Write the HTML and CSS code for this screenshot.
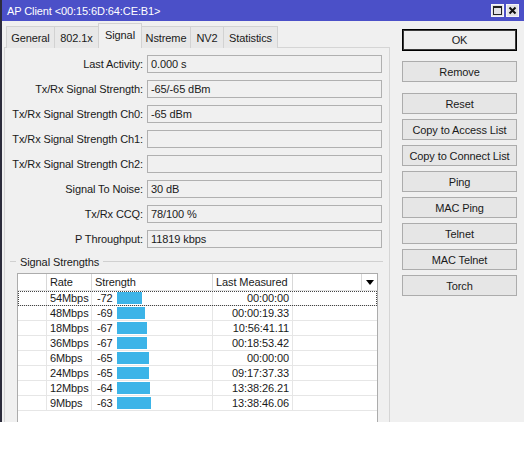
FILE: index.html
```html
<!DOCTYPE html>
<html>
<head>
<meta charset="utf-8">
<link rel="stylesheet" href="styles.css">
</head>
<body>
<div class="window">
  <div class="titlebar">
    <span class="title">AP Client &lt;00:15:6D:64:CE:B1&gt;</span>
    <div class="tbtns">
      <span class="tb"><svg width="13" height="13" viewBox="0 0 13 13"><rect x="0.5" y="0.5" width="12" height="12" fill="#e2e2e6" stroke="#f4f4f8"/><rect x="2.5" y="2.5" width="8" height="8" fill="none" stroke="#222"/><line x1="2" y1="3.5" x2="11" y2="3.5" stroke="#222"/></svg></span>
      <span class="tb"><svg width="13" height="13" viewBox="0 0 13 13"><rect x="0.5" y="0.5" width="12" height="12" fill="#e2e2e6" stroke="#f4f4f8"/><path d="M3.5 3.5 L9.5 9.5 M9.5 3.5 L3.5 9.5" stroke="#111" stroke-width="2"/></svg></span>
    </div>
  </div>
  <div class="main">
    <div class="left">
      <div class="tabs">
        <div class="tab w-general">General</div>
        <div class="tab w-8021x">802.1x</div>
        <div class="tab w-signal active">Signal</div>
        <div class="tab w-nstreme">Nstreme</div>
        <div class="tab w-nv2">NV2</div>
        <div class="tab w-stats">Statistics</div>
      </div>
      <div class="panel">
        <div class="form">
          <div class="row"><div class="lbl">Last Activity:</div><div class="val">0.000 s</div></div>
          <div class="row"><div class="lbl">Tx/Rx Signal Strength:</div><div class="val">-65/-65 dBm</div></div>
          <div class="row"><div class="lbl">Tx/Rx Signal Strength Ch0:</div><div class="val">-65 dBm</div></div>
          <div class="row"><div class="lbl">Tx/Rx Signal Strength Ch1:</div><div class="val"></div></div>
          <div class="row"><div class="lbl">Tx/Rx Signal Strength Ch2:</div><div class="val"></div></div>
          <div class="row"><div class="lbl">Signal To Noise:</div><div class="val">30 dB</div></div>
          <div class="row"><div class="lbl">Tx/Rx CCQ:</div><div class="val">78/100 %</div></div>
          <div class="row"><div class="lbl">P Throughput:</div><div class="val">11819 kbps</div></div>
        </div>
        <div class="group"><span class="dash"></span><span class="legend">Signal Strengths</span><span class="gline"></span></div>
        <div class="tbl">
          <div class="thead">
            <div class="th"></div>
            <div class="th">Rate</div>
            <div class="th">Strength</div>
            <div class="th">Last Measured</div>
            <div class="th"></div>
            <div class="th arrowcell"><span class="arrow"></span></div>
          </div>
          <div class="tr sel"><div class="td"></div><div class="td">54Mbps</div><div class="td str"><span class="num">-72</span><span class="bar" style="width:25px"></span></div><div class="td time">00:00:00</div><div class="td"></div></div>
          <div class="tr"><div class="td"></div><div class="td">48Mbps</div><div class="td str"><span class="num">-69</span><span class="bar" style="width:28px"></span></div><div class="td time">00:00:19.33</div><div class="td"></div></div>
          <div class="tr"><div class="td"></div><div class="td">18Mbps</div><div class="td str"><span class="num">-67</span><span class="bar" style="width:30px"></span></div><div class="td time">10:56:41.11</div><div class="td"></div></div>
          <div class="tr"><div class="td"></div><div class="td">36Mbps</div><div class="td str"><span class="num">-67</span><span class="bar" style="width:30px"></span></div><div class="td time">00:18:53.42</div><div class="td"></div></div>
          <div class="tr"><div class="td"></div><div class="td">6Mbps</div><div class="td str"><span class="num">-65</span><span class="bar" style="width:32px"></span></div><div class="td time">00:00:00</div><div class="td"></div></div>
          <div class="tr"><div class="td"></div><div class="td">24Mbps</div><div class="td str"><span class="num">-65</span><span class="bar" style="width:32px"></span></div><div class="td time">09:17:37.33</div><div class="td"></div></div>
          <div class="tr"><div class="td"></div><div class="td">12Mbps</div><div class="td str"><span class="num">-64</span><span class="bar" style="width:33px"></span></div><div class="td time">13:38:26.21</div><div class="td"></div></div>
          <div class="tr"><div class="td"></div><div class="td">9Mbps</div><div class="td str"><span class="num">-63</span><span class="bar" style="width:34px"></span></div><div class="td time">13:38:46.06</div><div class="td"></div></div>
        </div>
      </div>
    </div>
    <div class="buttons">
      <div class="btn ok">OK</div>
      <div class="btn remove">Remove</div>
      <div class="btn">Reset</div>
      <div class="btn">Copy to Access List</div>
      <div class="btn">Copy to Connect List</div>
      <div class="btn">Ping</div>
      <div class="btn">MAC Ping</div>
      <div class="btn">Telnet</div>
      <div class="btn">MAC Telnet</div>
      <div class="btn">Torch</div>
    </div>
  </div>
</div>
</body>
</html>
```
FILE: styles.css
```css
body {
  margin: 0;
  background: #ffffff;
  font-family: "Liberation Sans", Arial, sans-serif;
  font-size: 11px;
  letter-spacing: -0.1px;
  color: #1a1a1a;
}
.window {
  width: 522px;
  height: 422px;
  border-left: 2px solid #2c2c3c;
  background: #f0f0f0;
  display: flex;
  flex-direction: column;
  overflow: hidden;
}
.titlebar {
  height: 21px;
  flex: none;
  background: #4b50c8;
  color: #fff;
  display: flex;
  align-items: center;
  justify-content: space-between;
  padding-left: 5px;
  font-size: 11px;
}
.tbtns {
  display: flex;
  gap: 2px;
  margin-right: 5px;
}
.tb {
  display: block;
  width: 13px;
  height: 13px;
}
.tb svg { display: block; }
.main {
  flex: 1;
  display: flex;
  min-height: 0;
}
.left {
  width: 386px;
  margin-left: 2px;
  display: flex;
  flex-direction: column;
}
.tabs {
  height: 27px;
  flex: none;
  display: flex;
  align-items: flex-end;
  padding-left: 2px;
  margin-bottom: -1px;
  position: relative;
  z-index: 1;
}
.tab {
  box-sizing: border-box;
  height: 22px;
  border: 1px solid #d2d2d2;
  border-bottom: none;
  background: #e8e8e8;
  margin-left: -1px;
  display: flex;
  align-items: center;
  justify-content: center;
  padding-top: 1px;
}
.tab:first-child { margin-left: 0; }
.tab.active {
  height: 25px;
  background: #f0f0f0;
  padding-bottom: 3px;
  position: relative;
  z-index: 2;
}
.w-general { width: 49px; }
.w-8021x { width: 45px; }
.w-signal { width: 44px; }
.w-nstreme { width: 50px; }
.w-nv2 { width: 34px; }
.w-stats { width: 55px; }
.panel {
  flex: 1;
  border: 1px solid #d5d5d5;
  border-bottom: none;
  background: #f0f0f0;
  overflow: hidden;
  min-height: 0;
}
.form {
  padding-top: 7px;
}
.row {
  display: flex;
  align-items: center;
  height: 18px;
  margin-bottom: 7px;
}
.lbl {
  width: 138px;
  margin-right: 4px;
  text-align: right;
  white-space: nowrap;
}
.val {
  box-sizing: border-box;
  width: 235px;
  height: 18px;
  border: 1px solid #b0b0b0;
  background: #f0f0f0;
  padding-left: 3px;
  line-height: 16px;
}
.group {
  display: flex;
  align-items: center;
  height: 13px;
  margin-left: 5px;
  width: 373px;
}
.dash {
  width: 6px;
  height: 1px;
  background: #d0d0d0;
}
.legend {
  padding: 0 4px;
  white-space: nowrap;
}
.gline {
  flex: 1;
  height: 1px;
  background: #d0d0d0;
}
.tbl {
  box-sizing: border-box;
  margin: 5px 0 0 12px;
  width: 361px;
  height: 160px;
  background: #ffffff;
  border: 1px solid #acacac;
  border-bottom: none;
}
.thead {
  display: grid;
  grid-template-columns: 29px 45px 121px 80px 1fr 15px;
  height: 17px;
  box-sizing: border-box;
  border-bottom: 1px solid #e2e2e2;
}
.th {
  border-right: 1px solid #d8d8d8;
  padding-left: 3px;
  line-height: 16px;
  white-space: nowrap;
}
.th:last-child { border-right: none; }
.arrowcell {
  display: flex;
  align-items: center;
  justify-content: center;
  padding: 0;
}
.arrow {
  width: 0;
  height: 0;
  border-left: 4.5px solid transparent;
  border-right: 4.5px solid transparent;
  border-top: 5px solid #000;
}
.tr {
  display: grid;
  grid-template-columns: 29px 45px 121px 80px 1fr;
  height: 15px;
  box-sizing: border-box;
  border-bottom: 1px solid #e6e6e6;
}
.tr.sel {
  outline: 1px dotted #444;
  outline-offset: -1px;
}
.td {
  border-right: 1px solid #e6e6e6;
  padding-left: 3px;
  line-height: 14px;
  white-space: nowrap;
}
.td:last-child { border-right: none; }
.str {
  display: flex;
  align-items: flex-start;
  padding-left: 5px;
}
.num {
  width: 20px;
  flex: none;
}
.bar {
  display: block;
  height: 12px;
  background: #3cb4e8;
  margin-top: 1px;
}
.time {
  text-align: right;
  padding-left: 0;
  padding-right: 3px;
}
.buttons {
  width: 115px;
  margin-left: 12px;
  padding-top: 8px;
}
.btn {
  box-sizing: border-box;
  height: 21px;
  border: 1px solid #acacac;
  background: #e6e6e6;
  display: flex;
  align-items: center;
  justify-content: center;
  margin-bottom: 5px;
  white-space: nowrap;
}
.btn.ok {
  height: 22px;
  border: 1px solid #000;
  box-shadow: inset 0 0 0 1px #3a3a3a;
  background: #eeeeee;
  margin-bottom: 10px;
}
.btn.remove {
  margin-bottom: 11px;
}
```
